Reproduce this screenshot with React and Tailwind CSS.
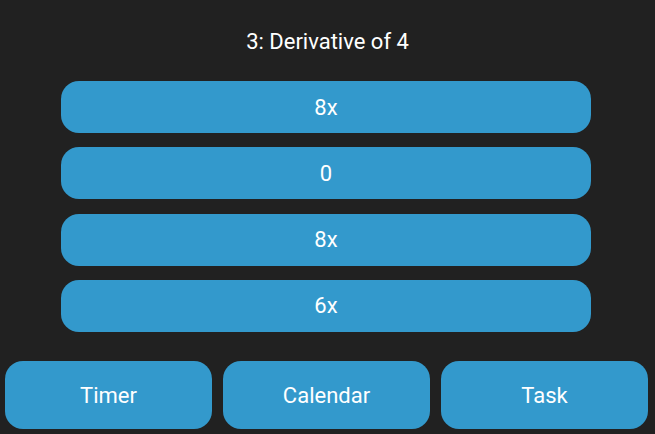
import React from 'react';

const options = ['8x', '0', '8x', '6x'];
const navItems = ['Timer', 'Calendar', 'Task'];

const App = () => {
    return (
        <div className="w-[655px] h-[434px] bg-[#212121] text-white flex flex-col font-['Roboto',sans-serif] overflow-hidden">
            {/* Question */}
            <div className="h-[81px] pt-[28px] text-center text-[22px] leading-[28px]">
                3: Derivative of 4
            </div>

            {/* Answers */}
            <div className="w-[530px] ml-[61px] flex flex-col gap-[14.3px]">
                {options.map((opt, i) => (
                    <button
                        key={i}
                        className="h-[52px] rounded-[18px] bg-[#3399cc] text-[22px] text-white flex items-center justify-center"
                    >
                        {opt}
                    </button>
                ))}
            </div>

            {/* Bottom nav */}
            <div className="mt-auto mb-[5px] pl-[5px] pr-[7px] grid grid-cols-3 gap-[11px]">
                {navItems.map((item) => (
                    <button
                        key={item}
                        className="h-[68px] rounded-[18px] bg-[#3399cc] text-[22px] text-white flex items-center justify-center"
                    >
                        {item}
                    </button>
                ))}
            </div>
        </div>
    );
};

export default App;
